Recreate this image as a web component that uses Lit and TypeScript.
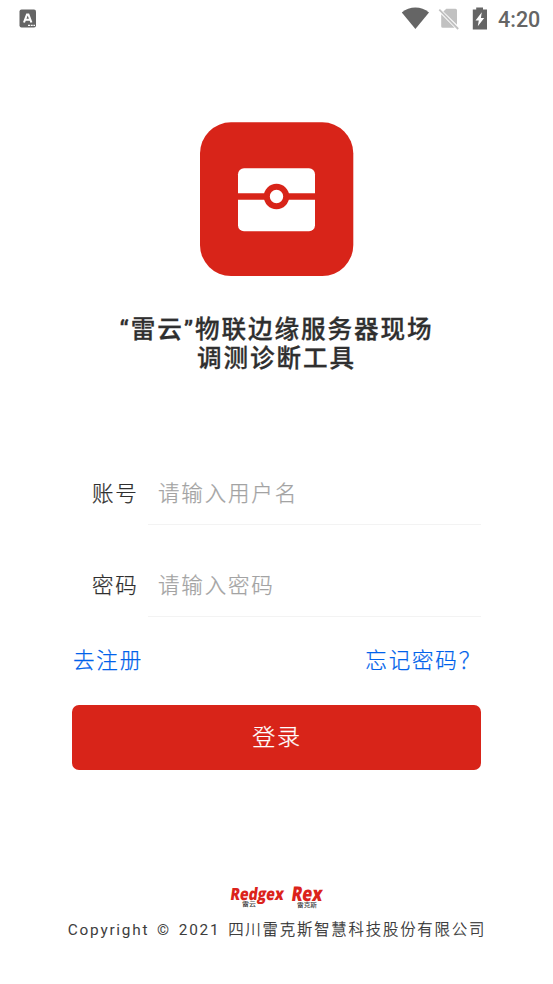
import { LitElement, html, css } from "lit";
import { customElement, property } from "lit/decorators.js";

@customElement("status-bar")
class StatusBar extends LitElement {
  static styles = css`
    :host { display: flex; justify-content: space-between; height: 38px; color: #656565; letter-spacing: 0; -webkit-text-stroke: 0; }
    svg { display: block; }
    .right { display: flex; }
    .time { font: 500 21.5px/39px Roboto, sans-serif; width: 55px; white-space: nowrap; }
  `;
  render() {
    return html`
      <svg width="60" height="38" viewBox="0 0 60 38">
        <rect x="19.5" y="9.5" width="16.5" height="18" rx="2" fill="#656565" />
        <path d="M24 22.5L27 14.5H28.4L31.4 22.5M25.2 19.8H30.2" fill="none" stroke="#fff" stroke-width="2.1" />
        <path d="M28 25.3h2m.7 0h2m.7 0h1.6" stroke="#fff" stroke-width="1.3" />
      </svg>
      <div class="right">
        <svg width="105" height="38" viewBox="393 0 105 38">
          <path d="M401.8 12.4C409.5 6 421.3 6 429 12.4L415.4 29Z" fill="#656565" />
          <path d="M446.3 8.7H455.5Q457 8.7 457 10.2V24.7L443.4 11.5ZM441.2 14.2L454.6 27.7H442.7Q441.2 27.7 441.2 26.2Z" fill="#c1c1c1" />
          <path d="M439.3 9.7L458.2 29" stroke="#c1c1c1" stroke-width="1.8" />
          <path d="M476.2 7.5H483V9.6H487V29.6H472.8V9.6H476.2Z" fill="#656565" />
          <path d="M481.8 12.2L475.5 20.5H478.8L477.8 26.2L484.2 17.9H480.9Z" fill="#fff" />
        </svg>
        <span class="time">4:20</span>
      </div>
    `;
  }
}

@customElement("form-row")
class FormRow extends LitElement {
  @property() label = "";
  @property() hint = "";
  static styles = css`
    :host { display: flex; height: 61px; line-height: 59px; font-size: 21.5px; }
    .label { width: 76px; padding-left: 20px; box-sizing: border-box; white-space: nowrap; color: #2f2f2f; }
    .field { flex: 1; padding-left: 10px; border-bottom: 1px solid #f3f3f3; color: #a3a3a3; }
  `;
  render() {
    return html`<span class="label">${this.label}</span><span class="field">${this.hint}</span>`;
  }
}

@customElement("app-root")
class AppRoot extends LitElement {
  static styles = css`
    :host {
      display: flex; flex-direction: column; height: 984px; background: #fff; overflow: hidden;
      font-family: Roboto, "Noto Sans CJK SC", sans-serif; font-weight: 300; letter-spacing: 1.84px; color: #2f2f2f;
      -webkit-text-stroke: 0.25px currentColor;
    }
    .logo { display: block; margin: 84px auto 0; width: 154px; height: 154px; }
    .title { margin: 39px 0 0; font-size: 24.58px; line-height: 29px; font-weight: 500; letter-spacing: 1.92px; text-align: center; -webkit-text-stroke-width: 0.3px; }
    .title span { display: block; }
    .form { margin: 91px 72px 0; }
    .form form-row + form-row { margin-top: 31px; }
    .links { display: flex; justify-content: space-between; margin: 27px 71px 0 73px;
      line-height: 34px; font-size: 21.5px; color: #0062eb; }
    .login { margin: 27px 72px 0; height: 65px; line-height: 64px; border: 0; padding: 0 0 0 1px; border-radius: 7px;
      background: #d82419; color: #fff; font-family: inherit; font-weight: inherit; font-size: 23.04px; letter-spacing: inherit; }
    .brands { display: block; margin: 110px auto 0; letter-spacing: 0; -webkit-text-stroke: 0; }
    .copy { margin-top: 5px; padding-left: 1px; line-height: 24px; font-size: 15.36px; text-align: center; white-space: nowrap; }
    .latin { font-weight: 400; letter-spacing: 1.75px; word-spacing: 2.3px; color: #3d3d3d; -webkit-text-stroke: 0; }
    .brand { font: 800 17px "Open Sans", sans-serif; fill: #db231b; }
    .brand.large { font-size: 20.5px; }
    .sub { font: 500 6px "Noto Sans CJK SC", sans-serif; fill: #444; }
  `;
  render() {
    return html`
      <status-bar></status-bar>
      <svg class="logo" viewBox="0 0 154 154">
        <rect width="153.3" height="153.7" y=".3" rx="31" fill="#d82419" />
        <rect x="38" y="46.3" width="77" height="63" rx="6" fill="#fff" />
        <path d="M38 74.5H115" stroke="#d82419" stroke-width="6.4" />
        <circle cx="76.5" cy="74.5" r="9.7" fill="#fff" stroke="#d82419" stroke-width="6" />
      </svg>
      <h1 class="title"><span>“雷云”物联边缘服务器现场</span><span>调测诊断工具</span></h1>
      <div class="form">
        <form-row label="账号" hint="请输入用户名"></form-row>
        <form-row label="密码" hint="请输入密码"></form-row>
      </div>
      <div class="links"><span>去注册</span><span>忘记密码？</span></div>
      <button class="login">登录</button>
      <svg class="brands" width="112" height="33" viewBox="220 880 112 33">
        <text class="brand" transform="translate(228.7 900) skewX(-8)" textLength="53.5" lengthAdjust="spacingAndGlyphs">Redgex</text>
        <text class="brand large" transform="translate(289.7 900.5) skewX(-8)" textLength="31" lengthAdjust="spacingAndGlyphs">Rex</text>
        <text class="sub" x="241" y="906" textLength="14" lengthAdjust="spacingAndGlyphs">雷云</text>
        <text class="sub" x="296" y="907.3" textLength="20" lengthAdjust="spacingAndGlyphs">雷克斯</text>
      </svg>
      <div class="copy"><span class="latin">Copyright © 2021 </span>四川雷克斯智慧科技股份有限公司</div>
    `;
  }
}
